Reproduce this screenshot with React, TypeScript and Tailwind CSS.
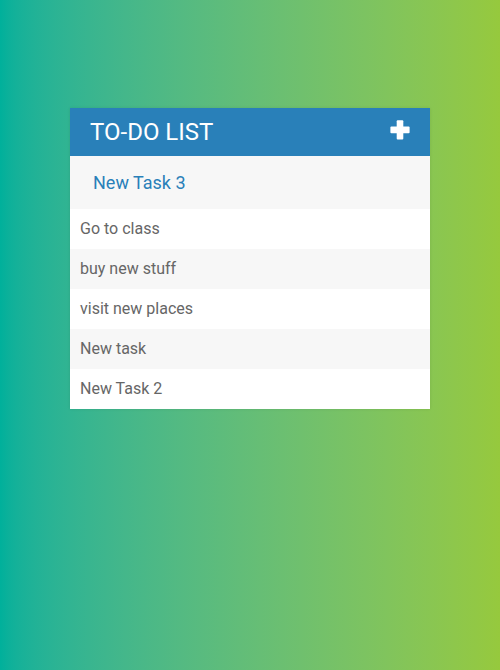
import React from "react";

const todos = ["Go to class", "buy new stuff", "visit new places", "New task", "New Task 2"];

function PlusIcon() {
  return (
    <svg width="20" height="20" viewBox="0 0 20 20" fill="white" className="mb-1">
      <rect x="6.7" y="0.3" width="6.6" height="19.2" rx="1" />
      <rect x="0.4" y="6.6" width="19.2" height="6.6" rx="1" />
    </svg>
  );
}

export default function App() {
  return (
    <div
      className="min-h-[670px] w-full bg-gradient-to-r from-[#00b09b] to-[#96c93d] pt-[108px]"
      style={{ fontFamily: "Roboto, 'Noto Sans', sans-serif" }}
    >
      <div className="mx-auto w-[360px] bg-[#f7f7f7] shadow-[0_0_3px_rgba(0,0,0,0.1)]">
        <h1 className="flex h-12 items-center justify-between bg-[#2980b9] px-5 text-[24px] font-normal uppercase leading-7 text-white">
          To-Do List
          <PlusIcon />
        </h1>
        <div className="h-[53px] border-[3px] border-transparent bg-[#f7f7f7] py-[13px] pl-5 pr-[13px] text-[18px] leading-[21px] text-[#2980b9]">
          New Task 3
        </div>
        <ul>
          {todos.map((t, i) => (
            <li
              key={t}
              className={`h-10 pl-2.5 text-[16px] leading-10 text-[#666] ${i % 2 === 1 ? "bg-[#f7f7f7]" : "bg-white"}`}
            >
              {t}
            </li>
          ))}
        </ul>
      </div>
    </div>
  );
}
